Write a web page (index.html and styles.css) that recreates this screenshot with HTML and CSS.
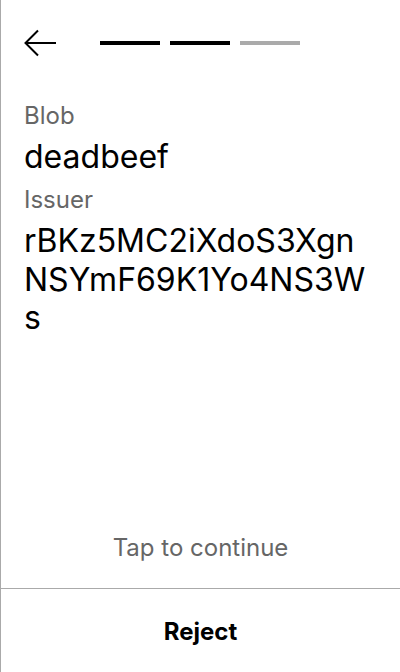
FILE: index.html
```html
<!DOCTYPE html>
<html>
<head>
<meta charset="utf-8">
<link rel="stylesheet" href="styles.css">
</head>
<body>
<div class="page">
  <header class="header">
    <svg class="back" width="32" height="32" viewBox="0 0 32 32" fill="none" stroke="#000" stroke-width="2">
      <path d="M32 16H1.5M14 3.5L1.5 16L14 28.5"/>
    </svg>
    <div class="steps">
      <span class="step done"></span>
      <span class="step done"></span>
      <span class="step"></span>
    </div>
  </header>
  <main class="content">
    <div class="label">Blob</div>
    <div class="value">deadbeef</div>
    <div class="label">Issuer</div>
    <div class="value addr">rBKz5MC2iXdoS3XgnNSYmF69K1Yo4NS3Ws</div>
  </main>
  <div class="tap">Tap to continue</div>
  <footer class="footer">
    <button class="reject">Reject</button>
  </footer>
</div>
</body>
</html>
```
FILE: styles.css
```css
* { box-sizing: border-box; }
html, body { margin: 0; padding: 0; background: #fff; }
body { font-family: Inter, "Noto Sans", sans-serif; color: #000; }
.page {
  width: 400px;
  height: 672px;
  border-left: 1px solid #aaa;
  display: flex;
  flex-direction: column;
}
.header {
  display: flex;
  align-items: center;
  padding: 27px 23px 0;
  height: 59px;
}
.back { display: block; flex: none; }
.steps {
  display: flex;
  gap: 10px;
  margin-left: 44px;
}
.step {
  width: 60px;
  height: 4px;
  background: #aaa;
}
.step.done { background: #000; }
.content {
  flex: 1;
  padding: 42px 23px 0;
}
.label {
  font-size: 24px;
  line-height: 29px;
  color: #666;
  margin-bottom: 8px;
}
.value {
  font-size: 32px;
  line-height: 38.4px;
  margin-bottom: 9px;
}
.addr { word-break: break-all; }
.tap {
  text-align: center;
  font-size: 24px;
  line-height: 29px;
  color: #666;
  margin-bottom: 26px;
}
.footer {
  border-top: 1px solid #aaa;
  height: 84px;
  display: flex;
  justify-content: center;
  padding-top: 28px;
}
.reject {
  background: none;
  border: 0;
  padding: 0;
  font-family: Inter, "Noto Sans", sans-serif;
  font-size: 24px;
  line-height: 29px;
  font-weight: 700;
  color: #000;
  height: 29px;
}
```
